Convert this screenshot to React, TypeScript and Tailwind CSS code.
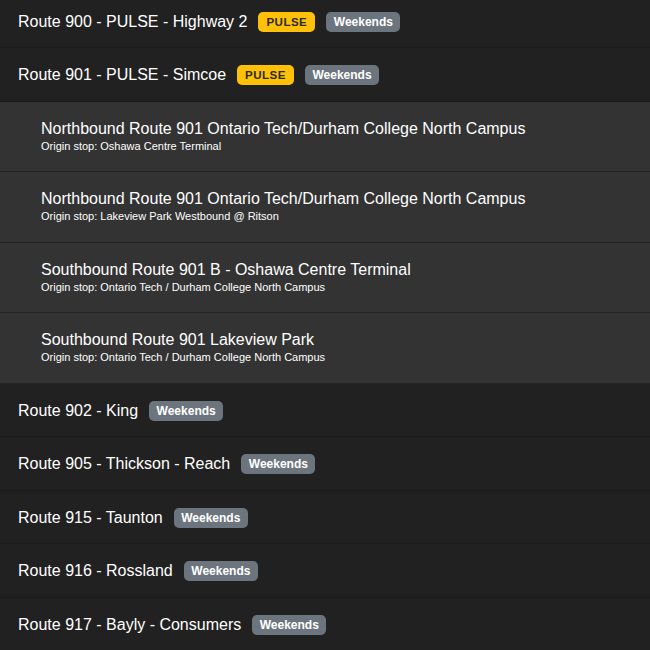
import React from 'react';

type Trip = { title: string; origin: string };
type Route = { name: string; pulse?: boolean; trips?: Trip[] };

const routes: Route[] = [
  { name: 'Route 900 - PULSE - Highway 2', pulse: true },
  {
    name: 'Route 901 - PULSE - Simcoe',
    pulse: true,
    trips: [
      { title: 'Northbound Route 901 Ontario Tech/Durham College North Campus', origin: 'Oshawa Centre Terminal' },
      { title: 'Northbound Route 901 Ontario Tech/Durham College North Campus', origin: 'Lakeview Park Westbound @ Ritson' },
      { title: 'Southbound Route 901 B - Oshawa Centre Terminal', origin: 'Ontario Tech / Durham College North Campus' },
      { title: 'Southbound Route 901 Lakeview Park', origin: 'Ontario Tech / Durham College North Campus' },
    ],
  },
  { name: 'Route 902 - King' },
  { name: 'Route 905 - Thickson - Reach' },
  { name: 'Route 915 - Taunton' },
  { name: 'Route 916 - Rossland' },
  { name: 'Route 917 - Bayly - Consumers' },
];

const Badge: React.FC<{ kind: 'pulse' | 'weekends' }> = ({ kind }) =>
  kind === 'pulse' ? (
    <span className="rounded-[5px] bg-[#ffc107] px-[8px] py-[4px] text-[11.5px] font-bold leading-[12px] tracking-[0.5px] text-[#2b2a26]">PULSE</span>
  ) : (
    <span className="rounded-[5px] bg-[#6c757d] px-[7.5px] py-[4px] text-[12px] font-bold leading-[12px] text-white">Weekends</span>
  );

export default function App() {
  return (
    <div className="h-[650px] w-[650px] overflow-hidden bg-[#212121] font-['Liberation_Sans',Arial,sans-serif] text-white">
      <div className="-mt-[5.5px]">
        {routes.map((r) => (
          <div key={r.name}>
            <div className="flex h-[53.5px] items-center gap-[11px] border-b border-[#1b1b1b] pl-[18px] pt-[1.5px] text-[16px]">
              <span>{r.name}</span>
              {r.pulse && <Badge kind="pulse" />}
              <Badge kind="weekends" />
            </div>
            {r.trips?.map((t, i) => (
              <div
                key={i}
                className="flex h-[70.5px] flex-col justify-center border-b border-[#232323] bg-[#333333] pb-[2px] pl-[41px]"
              >
                <div className="text-[16px] leading-[22px]">{t.title}</div>
                <div className="text-[11px] leading-[13px]">Origin stop: {t.origin}</div>
              </div>
            ))}
          </div>
        ))}
      </div>
    </div>
  );
}
